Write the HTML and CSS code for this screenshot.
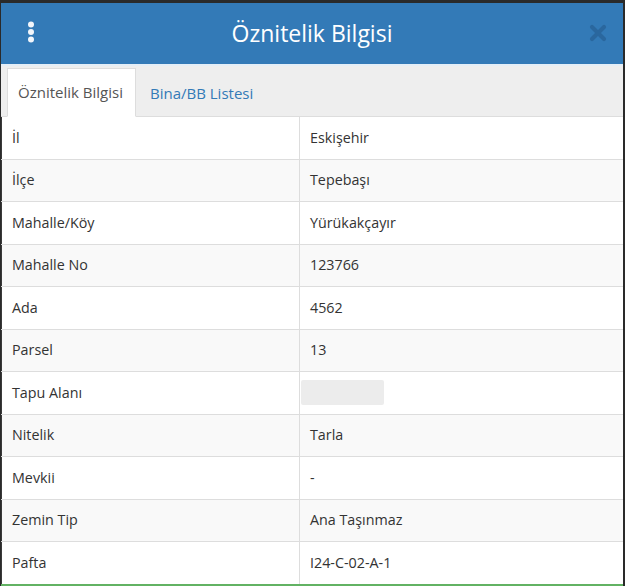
FILE: index.html
```html
<!DOCTYPE html>
<html lang="tr">
<head>
<meta charset="utf-8">
<title>Öznitelik Bilgisi</title>
<link rel="stylesheet" href="styles.css">
</head>
<body>
<div class="panel">
  <header class="head">
    <span class="kebab">
      <svg width="12" height="24" viewBox="0 0 12 24"><circle cx="6" cy="4.5" r="3"/><circle cx="6" cy="12" r="3"/><circle cx="6" cy="19.5" r="3"/></svg>
    </span>
    <h1 class="title">Öznitelik Bilgisi</h1>
    <span class="close">
      <svg width="18" height="18" viewBox="0 0 18 18"><path d="M3 3 L15 15 M15 3 L3 15" stroke-width="4.2" stroke-linecap="round"/></svg>
    </span>
  </header>
  <nav class="tabs">
    <span class="tab active">Öznitelik Bilgisi</span>
    <span class="tab">Bina/BB Listesi</span>
  </nav>
  <table class="grid">
    <tr><td>İl</td><td>Eskişehir</td></tr>
    <tr><td>İlçe</td><td>Tepebaşı</td></tr>
    <tr><td>Mahalle/Köy</td><td>Yürükakçayır</td></tr>
    <tr><td>Mahalle No</td><td>123766</td></tr>
    <tr><td>Ada</td><td>4562</td></tr>
    <tr><td>Parsel</td><td>13</td></tr>
    <tr><td>Tapu Alanı</td><td class="blurcell"><span class="blur"></span></td></tr>
    <tr><td>Nitelik</td><td>Tarla</td></tr>
    <tr><td>Mevkii</td><td>-</td></tr>
    <tr><td>Zemin Tip</td><td>Ana Taşınmaz</td></tr>
    <tr><td>Pafta</td><td>I24-C-02-A-1</td></tr>
  </table>
  <div class="foot"></div>
</div>
</body>
</html>
```
FILE: styles.css
```css
html, body {
  margin: 0;
  padding: 0;
  background: #2a2a2a;
  width: 625px;
  height: 586px;
  overflow: hidden;
}
body {
  font-family: "Open Sans", "Noto Sans", sans-serif;
  font-size: 14px;
  color: #333;
}
.panel {
  margin: 3px 2px 0 1px;
  background: #fff;
  height: 583px;
  display: flex;
  flex-direction: column;
}
.head {
  height: 61px;
  background: #337ab7;
  display: flex;
  align-items: center;
}
.kebab {
  width: 12px;
  height: 24px;
  margin-left: 24px;
  margin-top: -3px;
  display: flex;
}
.kebab svg { fill: #f2f6fb; }
.title {
  flex: 1;
  margin: 0;
  text-align: center;
  font-size: 23px;
  font-weight: 400;
  color: #fff;
  padding-right: 2px;
  margin-top: -1px;
}
.close {
  width: 18px;
  height: 18px;
  margin-right: 16px;
  margin-top: 0;
  display: flex;
}
.close svg { stroke: #2a679e; }
.tabs {
  height: 50px;
  background: #eeeeee;
  border-top: 2px solid #e4eef7;
  border-bottom: 1px solid #dddddd;
  display: flex;
  align-items: flex-end;
  padding-left: 6px;
  font-size: 15px;
}
.tab {
  height: 47px;
  line-height: 47px;
  padding: 0 11px 0 14px;
  color: #337ab7;
  box-sizing: border-box;
  margin-bottom: -1px;
}
.tab.active {
  background: #fff;
  color: #555;
  border: 1px solid #dddddd;
  border-bottom-color: #fff;
  width: 129px;
  height: 49px;
  line-height: 47px;
  padding-left: 10px;
  padding-right: 0;
  margin-right: 0;
  white-space: nowrap;
}
.grid {
  width: 100%;
  border-collapse: collapse;
  table-layout: fixed;
  border-left: 1px solid #3a3a3a;
}
.grid td {
  height: 42.5px;
  box-sizing: border-box;
  padding: 0 10px;
  border-top: 1px solid #dddddd;
  vertical-align: middle;
  line-height: 20px;
  font-size: 14.3px;
}
.grid tr:first-child td { border-top: 0; }
.grid td:first-child {
  width: 298px;
  border-right: 1px solid #dddddd;
}
.grid tr:nth-child(even) td { background: #f9f9f9; }
.blurcell { padding-left: 1px !important; }
.blur {
  display: block;
  width: 83px;
  height: 25px;
  background: #ececec;
  border-radius: 2px;
}
.foot {
  flex: 1;
  border-bottom: 2px solid #62b263;
}
```
